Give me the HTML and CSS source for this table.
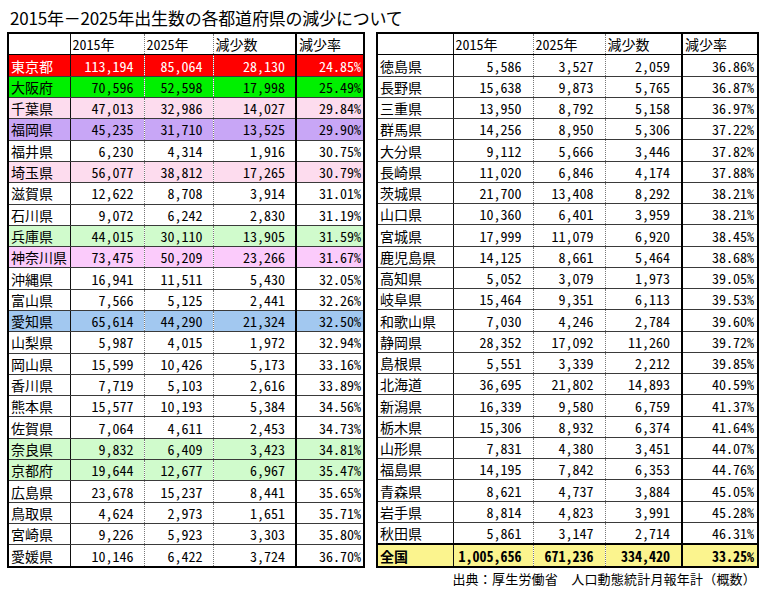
FILE: index.html
```html
<!DOCTYPE html>
<html lang="ja">
<head>
<meta charset="utf-8">
<link rel="stylesheet" href="styles.css">
</head>
<body>
<h1 class="title">2015年－2025年出生数の各都道府県の減少について</h1>
<div class="tables">
<table class="data left">
<colgroup><col class="c-name"><col class="c-a"><col class="c-b"><col class="c-c"><col class="c-d"></colgroup>
<tr class="head"><th></th><th>2015年</th><th>2025年</th><th>減少数</th><th>減少率</th></tr>
<tr class="red"><td>東京都</td><td>113,194</td><td>85,064</td><td>28,130</td><td>24.85%</td></tr>
<tr class="green"><td>大阪府</td><td>70,596</td><td>52,598</td><td>17,998</td><td>25.49%</td></tr>
<tr class="pink"><td>千葉県</td><td>47,013</td><td>32,986</td><td>14,027</td><td>29.84%</td></tr>
<tr class="purple"><td>福岡県</td><td>45,235</td><td>31,710</td><td>13,525</td><td>29.90%</td></tr>
<tr><td>福井県</td><td>6,230</td><td>4,314</td><td>1,916</td><td>30.75%</td></tr>
<tr class="pink"><td>埼玉県</td><td>56,077</td><td>38,812</td><td>17,265</td><td>30.79%</td></tr>
<tr><td>滋賀県</td><td>12,622</td><td>8,708</td><td>3,914</td><td>31.01%</td></tr>
<tr><td>石川県</td><td>9,072</td><td>6,242</td><td>2,830</td><td>31.19%</td></tr>
<tr class="lgreen"><td>兵庫県</td><td>44,015</td><td>30,110</td><td>13,905</td><td>31.59%</td></tr>
<tr class="magenta"><td>神奈川県</td><td>73,475</td><td>50,209</td><td>23,266</td><td>31.67%</td></tr>
<tr><td>沖縄県</td><td>16,941</td><td>11,511</td><td>5,430</td><td>32.05%</td></tr>
<tr><td>富山県</td><td>7,566</td><td>5,125</td><td>2,441</td><td>32.26%</td></tr>
<tr class="blue"><td>愛知県</td><td>65,614</td><td>44,290</td><td>21,324</td><td>32.50%</td></tr>
<tr><td>山梨県</td><td>5,987</td><td>4,015</td><td>1,972</td><td>32.94%</td></tr>
<tr><td>岡山県</td><td>15,599</td><td>10,426</td><td>5,173</td><td>33.16%</td></tr>
<tr><td>香川県</td><td>7,719</td><td>5,103</td><td>2,616</td><td>33.89%</td></tr>
<tr><td>熊本県</td><td>15,577</td><td>10,193</td><td>5,384</td><td>34.56%</td></tr>
<tr><td>佐賀県</td><td>7,064</td><td>4,611</td><td>2,453</td><td>34.73%</td></tr>
<tr class="lgreen"><td>奈良県</td><td>9,832</td><td>6,409</td><td>3,423</td><td>34.81%</td></tr>
<tr class="lgreen"><td>京都府</td><td>19,644</td><td>12,677</td><td>6,967</td><td>35.47%</td></tr>
<tr><td>広島県</td><td>23,678</td><td>15,237</td><td>8,441</td><td>35.65%</td></tr>
<tr><td>鳥取県</td><td>4,624</td><td>2,973</td><td>1,651</td><td>35.71%</td></tr>
<tr><td>宮崎県</td><td>9,226</td><td>5,923</td><td>3,303</td><td>35.80%</td></tr>
<tr><td>愛媛県</td><td>10,146</td><td>6,422</td><td>3,724</td><td>36.70%</td></tr>
</table>
<div class="right-col">
<table class="data right">
<colgroup><col class="c-name"><col class="c-a"><col class="c-b"><col class="c-c"><col class="c-d"></colgroup>
<tr class="head"><th></th><th>2015年</th><th>2025年</th><th>減少数</th><th>減少率</th></tr>
<tr><td>徳島県</td><td>5,586</td><td>3,527</td><td>2,059</td><td>36.86%</td></tr>
<tr><td>長野県</td><td>15,638</td><td>9,873</td><td>5,765</td><td>36.87%</td></tr>
<tr><td>三重県</td><td>13,950</td><td>8,792</td><td>5,158</td><td>36.97%</td></tr>
<tr><td>群馬県</td><td>14,256</td><td>8,950</td><td>5,306</td><td>37.22%</td></tr>
<tr><td>大分県</td><td>9,112</td><td>5,666</td><td>3,446</td><td>37.82%</td></tr>
<tr><td>長崎県</td><td>11,020</td><td>6,846</td><td>4,174</td><td>37.88%</td></tr>
<tr><td>茨城県</td><td>21,700</td><td>13,408</td><td>8,292</td><td>38.21%</td></tr>
<tr><td>山口県</td><td>10,360</td><td>6,401</td><td>3,959</td><td>38.21%</td></tr>
<tr><td>宮城県</td><td>17,999</td><td>11,079</td><td>6,920</td><td>38.45%</td></tr>
<tr><td>鹿児島県</td><td>14,125</td><td>8,661</td><td>5,464</td><td>38.68%</td></tr>
<tr><td>高知県</td><td>5,052</td><td>3,079</td><td>1,973</td><td>39.05%</td></tr>
<tr><td>岐阜県</td><td>15,464</td><td>9,351</td><td>6,113</td><td>39.53%</td></tr>
<tr><td>和歌山県</td><td>7,030</td><td>4,246</td><td>2,784</td><td>39.60%</td></tr>
<tr><td>静岡県</td><td>28,352</td><td>17,092</td><td>11,260</td><td>39.72%</td></tr>
<tr><td>島根県</td><td>5,551</td><td>3,339</td><td>2,212</td><td>39.85%</td></tr>
<tr><td>北海道</td><td>36,695</td><td>21,802</td><td>14,893</td><td>40.59%</td></tr>
<tr><td>新潟県</td><td>16,339</td><td>9,580</td><td>6,759</td><td>41.37%</td></tr>
<tr><td>栃木県</td><td>15,306</td><td>8,932</td><td>6,374</td><td>41.64%</td></tr>
<tr><td>山形県</td><td>7,831</td><td>4,380</td><td>3,451</td><td>44.07%</td></tr>
<tr><td>福島県</td><td>14,195</td><td>7,842</td><td>6,353</td><td>44.76%</td></tr>
<tr><td>青森県</td><td>8,621</td><td>4,737</td><td>3,884</td><td>45.05%</td></tr>
<tr><td>岩手県</td><td>8,814</td><td>4,823</td><td>3,991</td><td>45.28%</td></tr>
<tr><td>秋田県</td><td>5,861</td><td>3,147</td><td>2,714</td><td>46.31%</td></tr>
<tr class="total"><td>全国</td><td>1,005,656</td><td>671,236</td><td>334,420</td><td>33.25%</td></tr>
</table>
<p class="source">出典：厚生労働省　人口動態統計月報年計（概数）</p>
</div>
</div>
</body>
</html>
```

FILE: styles.css
```css
html, body {
  margin: 0;
  padding: 0;
  background: #fff;
}
body {
  width: 766px;
  height: 589px;
  overflow: hidden;
  font-family: "Noto Sans CJK JP", "Noto Sans", sans-serif;
  color: #000;
}
.title {
  margin: 0;
  padding: 7px 0 0 10px;
  height: 25px;
  box-sizing: border-box;
  font-size: 17px;
  line-height: 22px;
  font-weight: 400;
  letter-spacing: -0.2px;
  white-space: nowrap;
}
.tables {
  display: flex;
  align-items: flex-start;
  gap: 11px;
  padding-left: 7px;
  margin-top: 7px;
}
.data {
  border-collapse: collapse;
  table-layout: fixed;
  height: 536px;
  font-size: 14px;
  font-feature-settings: "hwid" 1;
  border: 2px solid #000;
}
.left { width: 356px; }
.right { width: 381px; }
.left .c-name { width: 62px; }
.left .c-a { width: 74px; }
.left .c-b { width: 69px; }
.left .c-c { width: 83px; }
.left .c-d { width: 68px; }
.right .c-name { width: 76px; }
.right .c-a { width: 80px; }
.right .c-b { width: 72px; }
.right .c-c { width: 77px; }
.right .c-d { width: 76px; }

.data th, .data td {
  padding: 0 10px 0 2px;
  line-height: 16px;
  white-space: nowrap;
  overflow: hidden;
  border-top: 1px solid #3a3a3a;
  border-bottom: 1px solid #3a3a3a;
  text-align: right;
}
.data th {
  font-weight: 400;
  text-align: left;
  padding-left: 2px;
  border-bottom: 1px solid #000;
}
.data td:first-child {
  text-align: left;
  padding-right: 0;
}
.data th:first-child, .data td:first-child {
  border-right: 1px solid #111;
}
.data th:nth-child(2), .data td:nth-child(2),
.data th:nth-child(3), .data td:nth-child(3) {
  border-right: 1px dotted #777;
}
.data th:nth-child(4), .data td:nth-child(4) {
  border-right: 2px solid #000;
}
.data td:nth-child(5) {
  padding-right: 2px;
}
.right td:nth-child(5) {
  padding-right: 3px;
}
.right td:nth-child(2),
.right td:nth-child(3),
.right td:nth-child(4) {
  padding-right: 11px;
}

.red td { background: #ff0000; color: #fff; }
.green td { background: #00f000; }
.pink td { background: #fddcee; }
.purple td { background: #c8a6f6; }
.lgreen td { background: #d0fbcc; }
.magenta td { background: #fbcbfb; }
.blue td { background: #a2c8f0; }
.total td {
  background: #fbf48e;
  font-weight: 700;
  border-top: 2px solid #000;
}

.right-col {
  display: flex;
  flex-direction: column;
}
.source {
  margin: 2px 0 0;
  font-size: 13px;
  line-height: 18px;
  text-align: right;
  padding-right: 3px;
  letter-spacing: 0.2px;
}
```
